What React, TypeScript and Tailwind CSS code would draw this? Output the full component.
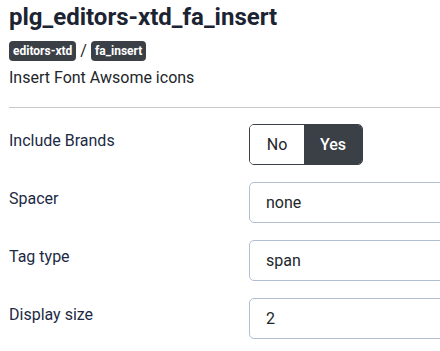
import React from "react";

const font = { fontFamily: "Roboto, 'Noto Sans', sans-serif" };

function Row({ label, children }: { label: string; children: React.ReactNode }) {
  return (
    <div className="flex items-center">
      <div className="w-[240px] shrink-0 text-[16px] leading-[20px] text-[#1c2a45] -mt-[8px]">{label}</div>
      <div className="flex-1">{children}</div>
    </div>
  );
}

function Field({ value }: { value: string }) {
  return (
    <div className="h-[41px] w-[220px] rounded-[5px] border border-[#b2bfd3] bg-white pl-[16px] flex items-center text-[16px] text-[#22262a]">
      {value}
    </div>
  );
}

export default function App() {
  return (
    <div className="w-[440px] h-[351px] overflow-hidden bg-white pl-[9px]" style={font}>
      <h1 className="text-[24px] leading-[28px] font-bold text-[#1c2433] pt-[3px]">plg_editors-xtd_fa_insert</h1>
      <div className="flex items-center gap-[4px] mt-[10px] h-[20px]">
        <span className="rounded-[4px] bg-[#3b4047] px-[4px] h-[20px] flex items-center text-[12px] font-bold text-white">editors-xtd</span>
        <span className="text-[16px] text-[#22262a]">/</span>
        <span className="rounded-[4px] bg-[#3b4047] px-[4px] h-[20px] flex items-center text-[12px] font-bold text-white">fa_insert</span>
      </div>
      <p className="mt-[7px] text-[16px] leading-[20px] text-[#22262a]">Insert Font Awsome icons</p>
      <hr className="mt-[19px] border-t border-[#c8c8c8]" />
      <div className="mt-[16px] flex flex-col gap-[17px]">
        <Row label="Include Brands">
          <div className="flex h-[41px] w-[114px] rounded-[5px] border border-[#3b4047] overflow-hidden text-[16px]">
            <div className="w-[54px] flex items-center justify-center bg-white text-[#22262a]">No</div>
            <div className="flex-1 flex items-center justify-center bg-[#3b4047] text-white font-medium">Yes</div>
          </div>
        </Row>
        <Row label="Spacer"><Field value="none" /></Row>
        <Row label="Tag type"><Field value="span" /></Row>
        <Row label="Display size"><Field value="2" /></Row>
      </div>
    </div>
  );
}
